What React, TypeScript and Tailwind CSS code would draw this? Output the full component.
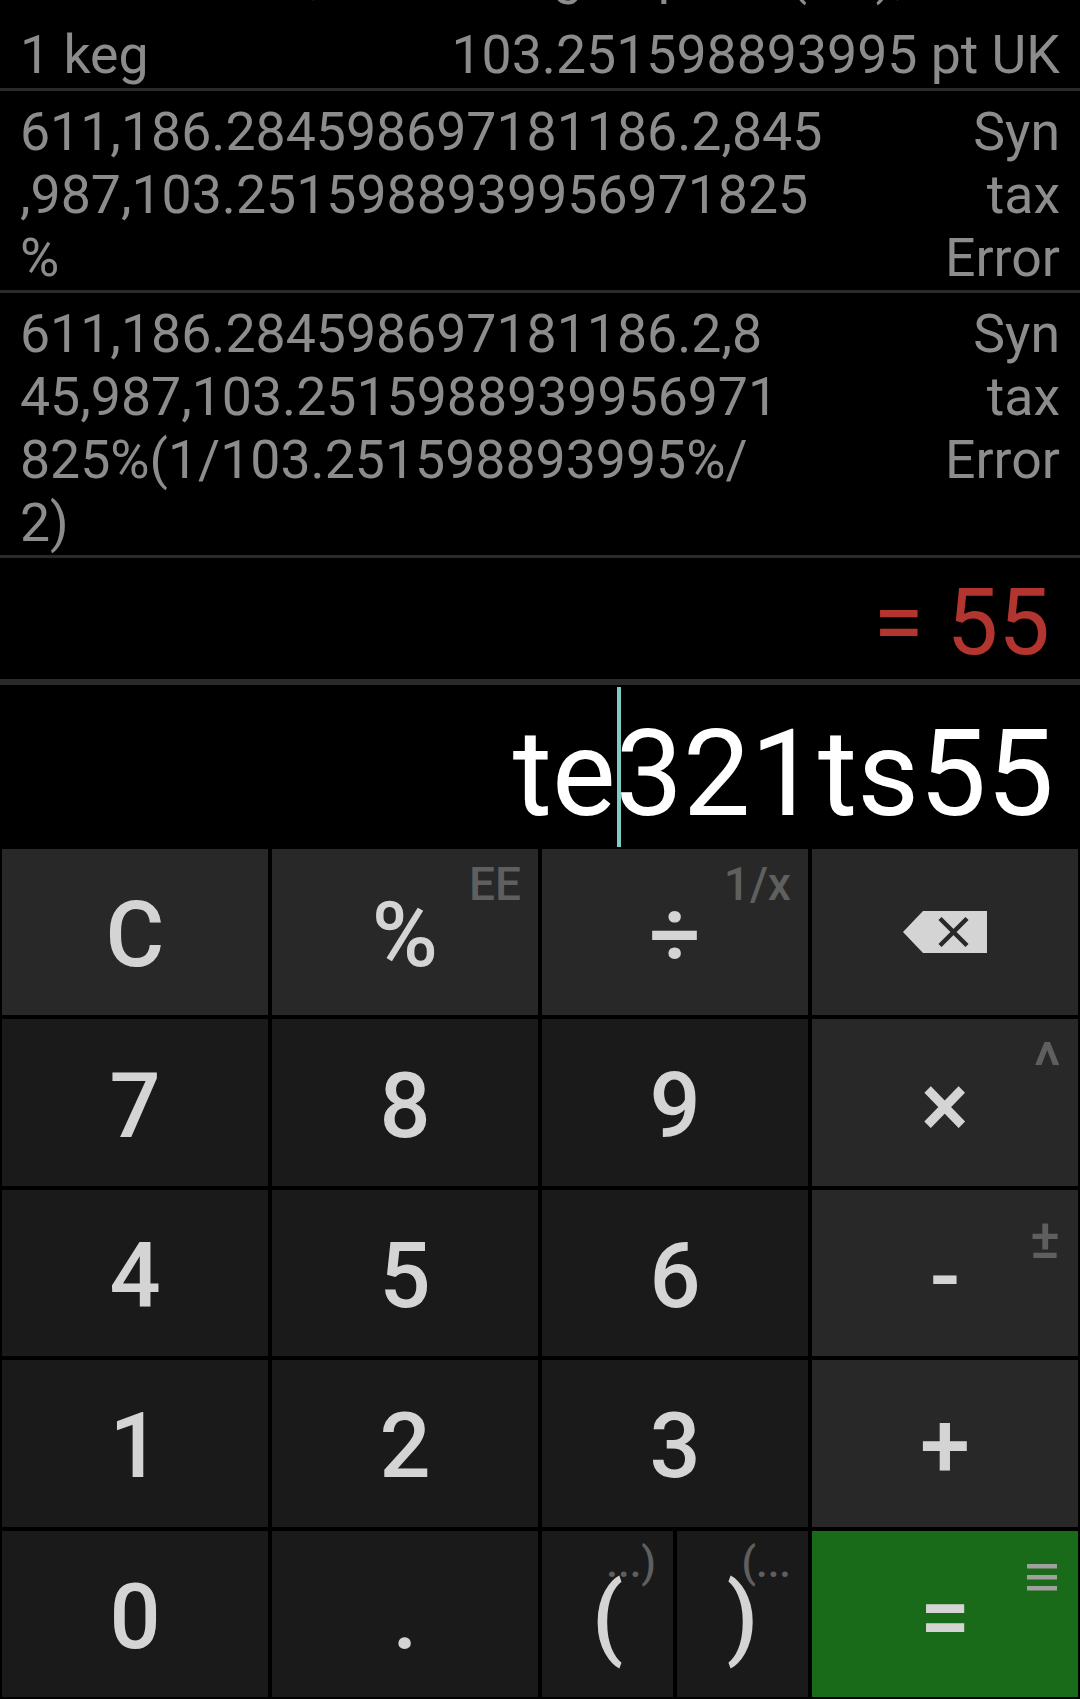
import React from 'react';

type Tone = 'op' | 'num' | 'eq';

const toneBg: Record<Tone, string> = {
  op: 'bg-[#282828]',
  num: 'bg-[#1a1a1a]',
  eq: 'bg-[#196a19]',
};

const Divider = ({ thick }: { thick?: boolean }) => (
  <div className={`shrink-0 bg-[#2a2a2a] ${thick ? 'h-[6px]' : 'h-[3px]'}`} />
);

function Key({ tone, label, sup }: { tone: Tone; label: React.ReactNode; sup?: React.ReactNode }) {
  return (
    <div className={`relative flex items-center justify-center ${toneBg[tone]}`}>
      {sup}
      <span className="relative z-10 mt-[8px] text-[90px] font-medium leading-none text-[#d4d4d4]">{label}</span>
    </div>
  );
}

const Sup = ({ children }: { children: React.ReactNode }) => (
  <span className="absolute right-[17px] top-[12px] text-[46px] font-medium leading-none text-[#5f5f5f]">
    {children}
  </span>
);

const ParenSup = ({ children }: { children: React.ReactNode }) => (
  <span className="absolute right-[17px] top-[11px] text-[42px] font-medium leading-none text-[#5f5f5f]">
    {children}
  </span>
);

function HistoryEntry({ lines, result }: { lines: string[]; result: string[] }) {
  return (
    <div className="flex shrink-0 justify-between pb-[1px] pl-[20px] pr-[20px] pt-[9px]">
      <div>
        {lines.map((l, i) => (
          <div key={i} className="whitespace-nowrap">{l}</div>
        ))}
      </div>
      <div className="text-right">
        {result.map((r, i) => (
          <div key={i}>{r}</div>
        ))}
      </div>
    </div>
  );
}

export default function App() {
  return (
    <div className="flex h-[1699px] w-[1080px] flex-col overflow-hidden bg-black font-[Roboto,sans-serif]">
      {/* History, scrolled to the bottom */}
      <div className="flex min-h-0 flex-1 flex-col justify-end overflow-hidden text-[53.6px] leading-[63px] text-[#8c8c8c]">
        <div className="shrink-0 pb-[2px] pl-[20px] pr-[20px]">
          <div className="whitespace-nowrap">Convert 611,186.28 keg to pints (UK),</div>
          <div className="mt-[17px] flex justify-between whitespace-nowrap">
            <span>1 keg</span>
            <span>103.251598893995 pt UK</span>
          </div>
        </div>
        <Divider />
        <HistoryEntry
          lines={['611,186.284598697181186.2,845', ',987,103.2515988939956971825', '%']}
          result={['Syn', 'tax', 'Error']}
        />
        <Divider />
        <HistoryEntry
          lines={['611,186.284598697181186.2,8', '45,987,103.2515988939956971', '825%(1/103.251598893995%/', '2)']}
          result={['Syn', 'tax', 'Error']}
        />
      </div>
      <Divider />

      {/* Live result */}
      <div className="flex h-[121px] shrink-0 items-end justify-end pb-[10px] pr-[30px] text-[92px] leading-none text-[#b3352f]">
        = 55
      </div>
      <Divider thick />

      {/* Input */}
      <div className="flex h-[162px] shrink-0 items-end justify-end pb-[13px] pr-[26px] text-[120px] leading-none text-white">
        <span>te</span>
        <span className="relative">
          <span className="absolute bottom-[-13px] left-[1px] top-[-27px] w-[4px] bg-[#80cbc4]" />
          321ts55
        </span>
      </div>

      {/* Keypad */}
      <div className="grid h-[852px] shrink-0 grid-cols-4 grid-rows-5 gap-[4px] p-[2px]">
        <Key tone="op" label="C" />
        <Key tone="op" label="%" sup={<Sup>EE</Sup>} />
        <Key tone="op" label="÷" sup={<Sup>1/x</Sup>} />
        <div className="flex items-center justify-center bg-[#282828]">
          <svg width="84" height="42" viewBox="0 0 84 42">
            <path d="M20 0H84V42H20L0 21Z" fill="#d4d4d4" />
            <path d="M37 7.5L64 34.5M64 7.5L37 34.5" stroke="#282828" strokeWidth="4.5" />
          </svg>
        </div>

        <Key tone="num" label="7" />
        <Key tone="num" label="8" />
        <Key tone="num" label="9" />
        <Key
          tone="op"
          label="×"
          sup={<span className="absolute right-[17px] top-[16px] text-[64px] font-medium leading-none text-[#5f5f5f]">^</span>}
        />

        <Key tone="num" label="4" />
        <Key tone="num" label="5" />
        <Key tone="num" label="6" />
        <Key
          tone="op"
          label="-"
          sup={<span className="absolute right-[18px] top-[21px] text-[56px] font-medium leading-none text-[#5f5f5f]">±</span>}
        />

        <Key tone="num" label="1" />
        <Key tone="num" label="2" />
        <Key tone="num" label="3" />
        <Key tone="op" label="+" />

        <Key tone="num" label="0" />
        <Key tone="num" label="." />
        <div className="grid grid-cols-2 gap-[4px]">
          <Key tone="num" label="(" sup={<ParenSup>...)</ParenSup>} />
          <Key tone="num" label=")" sup={<ParenSup>(...</ParenSup>} />
        </div>
        <Key
          tone="eq"
          label="="
          sup={
            <svg className="absolute right-[21px] top-[33px]" width="30" height="27" viewBox="0 0 30 27">
              <rect x="0" y="0" width="30" height="4.5" fill="#a0a0a0" />
              <rect x="0" y="11" width="30" height="4.5" fill="#a0a0a0" />
              <rect x="0" y="22" width="30" height="4.5" fill="#a0a0a0" />
            </svg>
          }
        />
      </div>
    </div>
  );
}
